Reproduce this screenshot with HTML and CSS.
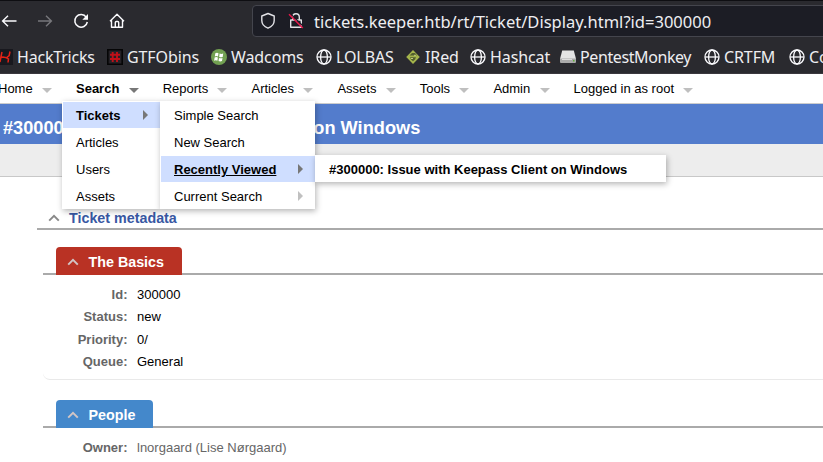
FILE: index.html
```
<!DOCTYPE html>
<html lang="en">
<head>
<meta charset="utf-8">
<title>#300000: Issue with Keepass Client on Windows</title>
<link rel="stylesheet" href="styles.css">
</head>
<body>
<svg class="defs" width="0" height="0">
  <symbol id="globe" viewBox="0 0 16 16"><g fill="none" stroke="#fbfbfe" stroke-width="1.3"><circle cx="8" cy="8" r="7"/><ellipse cx="8" cy="8" rx="3.4" ry="7"/><path d="M1.2 8h13.6"/></g></symbol>
  <symbol id="chevron" viewBox="0 0 12 8"><path d="M1.2 6.600 6 1.900l4.800 4.700" fill="none" stroke="currentColor" stroke-width="2"/></symbol>
</svg>
<header class="browser">
  <div class="toolbar">
    <svg class="tool" viewBox="0 0 16 16"><path d="M15.500 8H1.500M7 2.800 1.600 8 7 13.200" fill="none" stroke="#fbfbfe" stroke-width="1.400"/></svg>
    <svg class="tool" viewBox="0 0 16 16"><path d="M1 8h13M9 2.800 14.400 8 9 13.200" fill="none" stroke="#77777c" stroke-width="1.400"/></svg>
    <svg class="tool" viewBox="0 0 16 16"><path d="M13.300 4.300A6.300 6.300 0 1 0 14.300 9" fill="none" stroke="#fbfbfe" stroke-width="1.500"/><path d="M15 1v5.700H9.300z" fill="#fbfbfe"/></svg>
    <svg class="tool" viewBox="0 0 16 16"><path d="M1 8.200 8 1.300l7 6.900M2.500 7v7.300h11V7M6.300 14V9.500a1 1 0 0 1 1-1h1.400a1 1 0 0 1 1 1V14" fill="none" stroke="#fbfbfe" stroke-width="1.400" stroke-linejoin="round"/></svg>
    <div class="address">
      <svg width="16" height="18" viewBox="0 0 16 18"><path d="M8 1.500 14.200 4v4.500c0 3.800-2.700 6.300-6.200 7.700-3.500-1.400-6.200-3.900-6.200-7.700V4z" fill="none" stroke="#e2e2e6" stroke-width="1.400" stroke-linejoin="round"/></svg>
      <svg class="lock" width="16" height="18" viewBox="0 0 16 18"><path d="M4.700 8V5a3.300 3.300 0 0 1 6.600 0v3M2.700 8h10.600v7.300H2.700z" fill="none" stroke="#e2e2e6" stroke-width="1.400" stroke-linejoin="round"/><path d="M2.400 1.700 15 14" stroke="#1c1d25" stroke-width="1.200"/><path d="M1 2.300 14.800 16" stroke="#e8174b" stroke-width="1.500"/></svg>
      <span>tickets.keeper.htb/rt/Ticket/Display.html?id=300000</span>
    </div>
  </div>
  <div class="bookmarks">
    <a class="bm b1"><svg viewBox="0 0 16 16"><path fill="#18181e" d="M0 0h16v16H0z"/><path d="M5 3 4 7.500 3 13M13 2.500l-.8 4-2.700 2.300L6 8 4 8.500M9.500 8.800 11.500 10 11 13.500" fill="none" stroke="#e42216" stroke-width="1.500"/></svg>HackTricks</a>
    <a class="bm b2"><svg viewBox="0 0 16 16"><path fill="#242126" stroke="#050506" stroke-width="1.600" d="M.8.8h14.400v14.400H.8z"/><path d="M5.700 3v10M10 3v10M3 5.800h10M3 10h10" stroke="#c01019" stroke-width="1.900"/></svg>GTFObins</a>
    <a class="bm b3"><svg viewBox="0 0 16 16"><circle cx="8" cy="8" r="8" fill="#72a052"/><path d="M4.300 4.300Q6 3.400 7.500 4.300L7 7.500Q5.500 6.700 3.800 7.500zM8.600 4.600q1.700.8 3.600 0l-.5 3.300q-1.800.7-3.500 0zM3.600 8.500q1.700-.8 3.300 0l-.5 3.200q-1.700-.8-3.300 0zM8 8.900q1.700.8 3.500 0l-.5 3.200q-1.700.7-3.500 0z" fill="#fff"/></svg>Wadcoms</a>
    <a class="bm b4"><svg><use href="#globe"/></svg>LOLBAS</a>
    <a class="bm b5"><svg viewBox="0 0 16 16"><path d="M8 1l6.800 7L8 15 1.200 8z" fill="#a5b54c"/><path d="M4.500 6.500 7 4h3l2 2.500zM5 8.300h6l-1 2.200-2 1.800-2-1.800z" fill="#53602f"/><path d="M6 9.500h2M9 6.300h2" stroke="#c1cb82"/></svg>IRed</a>
    <a class="bm b6"><svg><use href="#globe"/></svg>Hashcat</a>
    <a class="bm b7"><svg viewBox="0 0 16 16"><path d="M2.200 1.500h11.600L16 10H0z" fill="#e4e4e4"/><path d="M0 9.500h16V13q0 1-1 1H1q-1 0-1-1z" fill="#aaa"/><path d="M2 10.500h10" stroke="#ddd"/><path d="M13 11h1.500v1.500H13z" fill="#5fae38"/></svg>PentestMonkey</a>
    <a class="bm b8"><svg><use href="#globe"/></svg>CRTFM</a>
    <a class="bm b9"><svg><use href="#globe"/></svg>Co</a>
  </div>
</header>

<nav class="main-nav">
  <a>Home</a><a class="active">Search</a><a>Reports</a><a>Articles</a><a>Assets</a><a>Tools</a><a>Admin</a><a>Logged in as root</a>
</nav>
<h1>#300000: Issue with Keepass Client on Windows</h1>
<div class="page-menu"></div>

<div class="menu menu-search">
  <a class="current more">Tickets</a><a>Articles</a><a>Users</a><a>Assets</a>
  <div class="menu menu-tickets">
    <a>Simple Search</a><a>New Search</a><a class="current more hovered">Recently Viewed</a><a class="more">Current Search</a>
    <div class="menu menu-recent"><a>#300000: Issue with Keepass Client on Windows</a></div>
  </div>
</div>

<main>
  <h2><svg class="chev"><use href="#chevron"/></svg><span>Ticket metadata</span></h2>
  <section class="box basics">
    <div class="tabline"><h3><svg class="chev"><use href="#chevron"/></svg>The Basics</h3></div>
    <dl>
      <dt>Id:</dt><dd>300000</dd>
      <dt>Status:</dt><dd>new</dd>
      <dt>Priority:</dt><dd>0/</dd>
      <dt>Queue:</dt><dd>General</dd>
    </dl>
  </section>
  <section class="box people">
    <div class="tabline"><h3><svg class="chev"><use href="#chevron"/></svg>People</h3></div>
    <dl>
      <dt>Owner:</dt><dd class="user">lnorgaard (Lise Nørgaard)</dd>
    </dl>
  </section>
</main>
</body>
</html>
```

FILE: styles.css
```
* { box-sizing: border-box; }
html { overflow: hidden; }
body {
  margin: 0;
  width: 823px;
  height: 462px;
  overflow: hidden;
  position: relative;
  background: #fff;
  color: #000;
  font: 13px "Liberation Sans", Arial, sans-serif;
  white-space: nowrap;
}
h1, h2, h3, dl, dd { margin: 0; }
.defs { position: absolute; }

/* Browser chrome */
.browser {
  height: 74px;
  background: #2a2a2f;
  border-top: 1px solid #0e0e12;
  border-bottom: 1px solid #3a383e;
  color: #eeeef1;
  font: 16px "Noto Sans", sans-serif;
}
.toolbar { display: flex; align-items: center; height: 40px; padding-left: 1px; }
.tool { flex: none; width: 16px; height: 16px; margin-right: 20px; }
.address {
  display: flex;
  align-items: center;
  flex: none;
  width: 600px;
  height: 32px;
  margin-left: 107px;
  padding-left: 7px;
  background: #1c1d25;
  border: 1px solid #44454d;
  border-radius: 4px;
  font-size: 16.55px;
}
.lock { margin: 0 10px 0 12px; }
.bookmarks { display: flex; height: 32px; align-items: center; }
.bm { display: flex; flex: none; align-items: center; gap: 4px; letter-spacing: -.1px; }
.bm svg { width: 16px; height: 16px; flex: none; }
.b1 { width: 110px; margin-left: -3px; letter-spacing: -.2px; }
.b2 { width: 104px; }
.b3 { width: 105px; }
.b4 { width: 89px; }
.b5 { width: 65px; }
.b6 { width: 90px; }
.b7 { width: 144px; letter-spacing: -.4px; }
.b8 { width: 85px; }

/* Main navigation */
.main-nav {
  display: flex;
  height: 30px;
  margin-left: -2px;
  border-bottom: 1px solid #ccc;
  line-height: 30px;
}
.main-nav a { flex: none; display: flex; align-items: center; margin-right: 24px; }
.main-nav a::after {
  content: "";
  margin: 3px 0 0 9.3px;
  border: 5px solid transparent;
  border-top-color: #bfbfbf;
  border-bottom: 0;
}
.main-nav .active { font-weight: bold; }
.main-nav .active::after { border-top-color: #777; }

h1 {
  height: 40px;
  padding-left: 3px;
  background: #537ccc;
  color: #fff;
  font-size: 18.2px;
  line-height: 48px;
}
.page-menu { height: 33px; background: #ededed; border-bottom: 1px solid #c8c8c8; }

/* Drop-down menus */
.menu {
  position: absolute;
  background: #fff;
  box-shadow: 1px 2px 6px rgba(0, 0, 0, .3);
}
.menu-search { left: 62px; top: 101px; width: 98px; height: 108px; z-index: 2; }
.menu-tickets { left: 98px; top: 0; width: 155px; height: 108px; }
.menu-recent { left: 155px; top: 54px; width: 351px; height: 27px; font-weight: bold; }
.menu a {
  display: flex;
  align-items: center;
  justify-content: space-between;
  height: 26px;
  margin: 1px 0 0 1px;
  padding: 1px 12px 0 13px;
}
.menu .current { background: #cfdeff; font-weight: bold; }
.more::after {
  content: "";
  margin-top: -2px;
  border: 5px solid transparent;
  border-left-color: #c0c0c0;
  border-right: 0;
}
.current::after { border-left-color: #777; }
.hovered { text-decoration: underline; }

/* Ticket content */
main { padding-left: 37px; }
.chev { width: 12px; height: 8px; flex: none; }
h2 {
  display: flex;
  align-items: center;
  height: 26px;
  margin-top: 27px;
  padding: 3px 0 0 10.5px;
  border-bottom: 2px solid #aaa;
  color: #3858a3;
  font-size: 14.3px;
}
h2 .chev { margin-right: 9.5px; color: #888; }
.box { margin-left: 6px; width: 800px; }
.basics { height: 133px; margin-top: 17px; border-bottom: 1px solid #e9e9e9; border-radius: 0 0 0 7px; }
.people { margin-top: 20px; }
.tabline { height: 28px; padding-left: 13px; background: linear-gradient(#aaa, #aaa) bottom / 100% 2px no-repeat; }
h3 {
  display: flex;
  align-items: center;
  height: 28px;
  padding: 2px 0 0 10.5px;
  border-radius: 4px 4px 0 0;
  color: #fff;
  font-size: 14.3px;
}
h3 .chev { margin-right: 10px; color: #d2c5c5; }
.basics h3 { width: 126px; background: #b93224; }
.people h3 { width: 97px; background: #4488cb; }
dl {
  display: grid;
  grid-template-columns: 84.5px 1fr;
  grid-auto-rows: 22.3px;
  column-gap: 9.5px;
  align-items: center;
  padding-top: 8.3px;
}
dt { color: #666; font-weight: bold; text-align: right; }
.user { color: #666; }
```
